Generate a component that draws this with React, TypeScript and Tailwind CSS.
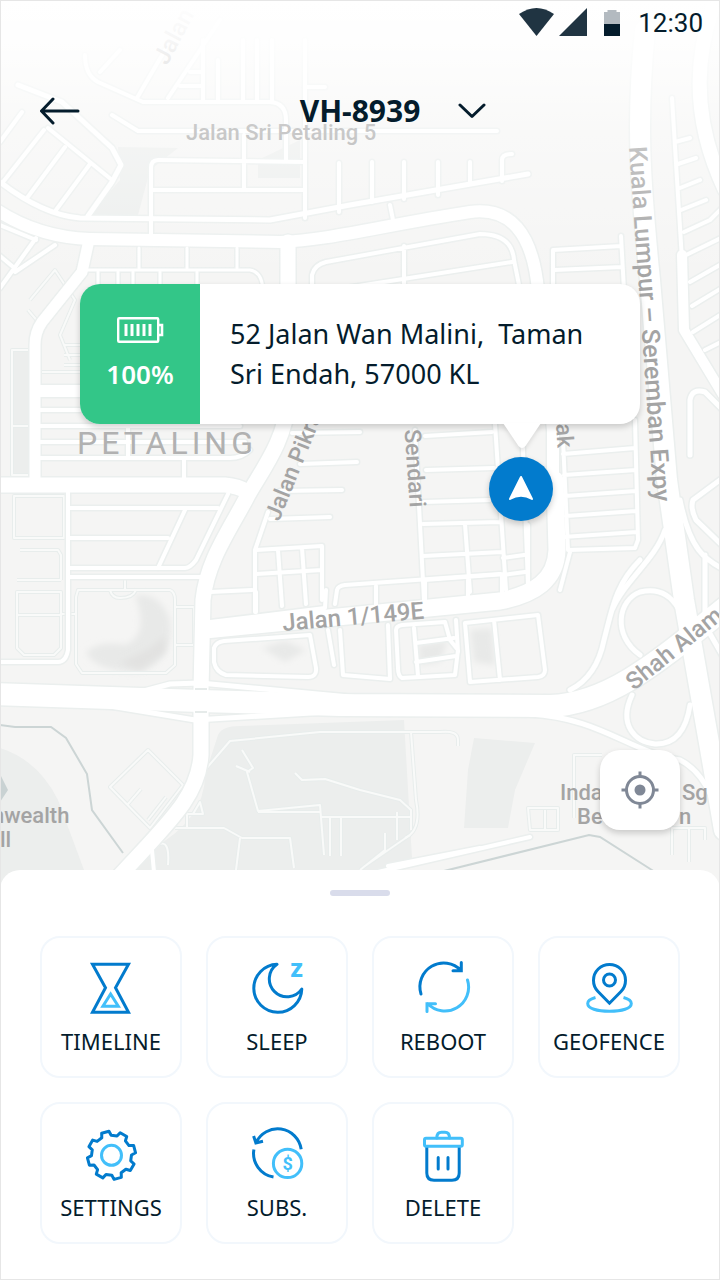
import type { ReactNode } from "react";

type Road = {
  d: string;
  width: number;
};

const majorRoads: Road[] = [
  { d: "M-5 209C25 229 55 238 90 239L280 242C330 240 380 226 470 212Q530 204 538 290L553 430V500", width: 12 },
  { d: "M288 242V400C286 440 262 470 248 495C230 530 207 560 203 600L201 690V755C198 800 165 825 105 892", width: 15 },
  { d: "M89 240L82 272L42 322Q35 332 35 345V485", width: 11 },
  { d: "M-5 485H225Q238 486 248 492", width: 15 },
  { d: "M38 391H270", width: 12 },
  { d: "M555 480L557 550C556 580 535 594 500 601L205 630", width: 17 },
  { d: "M-5 694L200 701L340 705L550 706C610 704 660 660 725 608", width: 22 },
  { d: "M645 30C636 120 640 180 650 280L667 480L684 600L712 760L724 830", width: 20 },
  { d: "M712 10C695 60 692 120 725 190", width: 14 },
  { d: "M682 255L684 330L725 398", width: 10 },
];

const minorRoads: Road[] = [
  // north west blocks
  { d: "M18 85L62 102L112 148L121 165L112 182L88 216", width: 5 },
  { d: "M0 182C30 205 55 216 80 218L270 220L350 205L528 174", width: 5 },
  { d: "M48 128L112 180M65 147L27 198M90 164L56 210M22 112L0 142M44 130L3 182", width: 4 },
  { d: "M85 55Q85 75 98 82L143 102H270Q286 103 286 120V160", width: 4 },
  { d: "M112 115L138 131H497", width: 4 },
  { d: "M151 236V168Q151 160 158 160L305 162M152 190H305M244 135V188M305 40V218M151 218V236", width: 4 },
  { d: "M100 72L120 50M137 98L165 50M168 98L220 20M180 86H203M190 72H203M203 40V100M218 60V100M243 40V100M257 40V100M272 40V100M305 87H325", width: 4 },
  { d: "M339 163V212M372 162V202M404 162V199M438 162V195M470 162V184M502 181V160Q502 154 512 154M390 205L393 220", width: 4 },
  // west side, around the main junction
  { d: "M0 225L36 240M36 238L0 288M0 256L12 266M15 272L55 245", width: 4 },
  { d: "M84 270H250Q262 272 263 290M139 248V268M187 248V268M237 248V268M98 272V285M118 272V290M133 272V290M160 272V290M197 272V290", width: 3 },
  { d: "M312 286V275Q314 265 326 262L480 234Q512 234 514 260L520 290M320 292L512 262M404 246V290", width: 4 },
  { d: "M553 285V250L621 246M554 270L622 267M621 236L624 290M553 285L560 420", width: 4 },
  { d: "M40 410H240M40 426H240M40 442H245M128 410V458M40 458H230Q242 458 250 450M184 458V485", width: 4 },
  { d: "M68 492V650Q66 662 58 662H0M70 508H218M70 538H168M70 568H185Q190 568 196 560L228 494M185 510L158 568M70 577H205", width: 4 },
  { d: "M292 433L360 432M300 464L357 462M280 491L342 490M270 519L330 517", width: 4 },
  { d: "M268 512L255 550V612M256 550L322 546V600M278 550L282 606M302 548L306 604M256 574L322 570M210 592L252 590M256 592V612", width: 4 },
  { d: "M210 622L325 608L326 590M335 604L337 590Q338 586 345 585L500 574", width: 4 },
  // centre grid
  { d: "M415 430L424 600M495 424L506 590M522 424L528 585M425 436L492 432M426 470L494 468M424 502L490 500M423 524L500 522M423 556L502 552M424 580L505 574M465 524L470 592M503 558L524 555M503 575L525 572M528 525V590", width: 4 },
  { d: "M563 440L568 550L635 548L638 540L635 420M563 454L635 448M564 475L636 470M565 496L636 491M566 516L636 511M563 537L637 532M570 552L560 590", width: 4 },
  { d: "M376 586V610M425 582V605M468 580V602M502 576V598M528 574V592", width: 4 },
  { d: "M214 648Q216 642 224 641L310 635L316 668Q317 677 308 677L226 675Q216 672 214 662ZM328 630L334 665M340 630L343 675L390 679L388 625", width: 4 },
  { d: "M396 630Q396 626 402 625L445 622L450 640L458 650L455 675L402 678Q398 676 398 668ZM414 628L418 676M416 643L454 638M416 662L456 656M456 620L458 652", width: 4 },
  { d: "M465 623L538 615L545 670Q545 676 538 677L470 682ZM494 620L500 680", width: 4 },
  // expressway ramps and loops
  { d: "M640 655C612 635 618 600 640 592Q665 586 678 608M632 695C618 725 635 742 655 744Q684 745 690 705", width: 5 },
  { d: "M640 560C615 585 612 610 604 640C600 660 590 680 570 690M665 530C655 560 625 580 612 610", width: 5 },
  { d: "M530 714C600 718 630 752 680 760Q710 775 722 830M140 692L170 684L200 683L360 698M110 706L195 720L360 710", width: 5 },
  { d: "M680 500C690 550 705 560 725 570M720 480L693 500Q690 508 696 520L725 548M690 455V400Q692 388 705 392L725 412M705 555V625L725 660", width: 5 },
  { d: "M672 98L682 260M675 142L690 138M678 164L696 158M680 188L700 180M681 210L706 200M684 232L710 220L725 205M684 256L725 236M690 282L725 262M692 306L725 286M693 332L725 312M705 350L725 340", width: 4 },
  { d: "M378 872L530 837M388 866L480 848", width: 4 },
  { d: "M152 850L154 872", width: 4 },
];

const paths: string[] = [
  "M17 592V648L24 655H54L61 648V592ZM17 615H60M17 580H61",
  "M14 496H64V538H14ZM20 550H58L61 555V580M12 350H30V475H12ZM12 426H38M40 372H80",
  "M78 590H170Q175 592 175 600V665L166 673H82L76 664V597ZM110 590Q112 598 120 598Q133 598 136 590M125 580V590M176 607H196M176 645H194V607M60 614H76",
  "M30 300L55 270L75 300L60 335L70 360M28 310L45 330M64 345H80M64 355H80M64 365H80",
  "M148 750L183 785L150 828L110 787ZM128 804L141 789M148 820L166 797",
  "M205 770L230 741L320 732H440Q458 730 458 740V746M242 750L253 768L247 772L258 811L320 805L324 855M236 766L250 772",
  "M295 773L302 780L325 779L360 790L400 800L411 810V830M320 817H410M330 818V856M341 818V856M258 812H320M397 812V840M385 833V850L360 870M410 835L365 866",
  "M175 828H224L242 838H290L294 868M240 838L236 870M187 828V814H203L200 802L193 814M158 845Q170 838 168 865",
  "M411 732L416 800Q422 830 405 838M574 818V755H602M528 808H558V830H530ZM545 810V830M672 828V855M689 828V862M672 828H705V840",
];

const streetLabels = [
  { text: "Jalan", x: 167, y: 66, rotate: -62, size: 24 },
  { text: "Jalan Sri Petaling 5", x: 186, y: 140, rotate: 0, size: 22 },
  { text: "Jalan Pikrama", x: 279, y: 522, rotate: -68, size: 23 },
  { text: "Lorong Sendari", x: 399, y: 352, rotate: 86, size: 23 },
  { text: "ak", x: 556, y: 424, rotate: 86, size: 23 },
  { text: "Kuala Lumpur – Seremban Expy", x: 629, y: 147, rotate: 86, size: 25 },
  { text: "Jalan 1/149E", x: 283, y: 631, rotate: -5, size: 24 },
  { text: "Shah Alam", x: 634, y: 691, rotate: -39, size: 24 },
  { text: "nwealth", x: -8, y: 823, rotate: 0, size: 22 },
  { text: "ll", x: 0, y: 847, rotate: 0, size: 22 },
  { text: "Inda", x: 560, y: 800, rotate: 0, size: 22 },
  { text: "Sg", x: 682, y: 800, rotate: 0, size: 22 },
  { text: "Be", x: 577, y: 824, rotate: 0, size: 22 },
  { text: "n", x: 679, y: 824, rotate: 0, size: 22 },
];

const MapBackground = () => {
  return (
    <svg
      className="absolute inset-0 -z-10 h-full w-full"
      viewBox="0 0 720 890"
      preserveAspectRatio="xMidYMin slice"
      aria-hidden="true"
    >
      <defs>
        <linearGradient id="fade" x1="0" y1="0" x2="0" y2="1">
          <stop offset="0" stopColor="#fff" />
          <stop offset="0.15" stopColor="#fff" stopOpacity="0.9" />
          <stop offset="0.45" stopColor="#fff" stopOpacity="0.42" />
          <stop offset="1" stopColor="#fff" stopOpacity="0" />
        </linearGradient>
        <filter id="soft" x="-20%" y="-20%" width="140%" height="140%">
          <feGaussianBlur stdDeviation="3" />
        </filter>
      </defs>
      <rect width="720" height="890" fill="#f5f5f4" />

      {/* parks and building ground */}
      <g fill="#eceeed">
        <path d="M205 775L218 735Q222 726 240 726L404 720L412 858L370 890H110L150 850Q205 820 205 775Z" />
        <path d="M474 738L535 743L515 790L508 828H464L468 770Z" />
        <path d="M0 748Q38 760 58 800L84 870V890H0Z" />
        <path d="M118 147L178 148L150 170L138 215H90L120 180Z" />
        <path d="M258 160L300 140V178H258ZM12 350H30V475H12Z" />
      </g>
      <g fill="#e8e9e8" filter="url(#soft)">
        <path d="M135 595Q160 592 170 620Q175 660 140 672Q95 672 86 652Q100 640 125 645Q150 635 135 595Z" />
        <path d="M262 648L285 641L306 650L285 662ZM418 645L448 640L440 662L420 665ZM470 630L492 628L495 665L474 662Z" />
      </g>
      <path d="M120 663L150 648L165 636V652L140 670Z" fill="#e2e2e1" filter="url(#soft)" />
      <path d="M0 774L8 790L0 802Z" fill="#c9d2d3" />

      <g fill="none" stroke="#ccd5d5" strokeWidth="2">
        <path d="M0 725L15 727H51L66 738L87 774L92 810L123 853" />
        <path d="M440 872L589 835L600 837L655 872" />
      </g>

      <g fill="none" strokeLinejoin="round">
        {paths.map((d) => (
          <path key={d} d={d} stroke="#e8edec" strokeWidth="4" />
        ))}
        {paths.map((d) => (
          <path key={d} d={d} stroke="#f9faf9" strokeWidth="2" />
        ))}
      </g>
      <g fill="none" stroke="#ebefee" strokeLinejoin="round" strokeLinecap="round">
        {[...minorRoads, ...majorRoads].map((road) => (
          <path key={road.d} d={road.d} strokeWidth={road.width + 3} />
        ))}
      </g>
      <g fill="none" stroke="#fff" strokeLinejoin="round" strokeLinecap="round">
        {[...minorRoads, ...majorRoads].map((road) => (
          <path key={road.d} d={road.d} strokeWidth={road.width} />
        ))}
      </g>
      <path d="M195 689H207M195 712H207" stroke="#e6ebea" strokeWidth="2" />

      <g className="font-[Roboto,sans-serif] font-medium" fill="#a4a4a4">
        {streetLabels.map(({ text, x, y, rotate, size }) => (
          <text key={text} fontSize={size} transform={`translate(${x} ${y}) rotate(${rotate})`}>
            {text}
          </text>
        ))}
        <text x="77" y="454" className="text-[32px] font-normal tracking-[4px]" fill="#b1b1b1">
          PETALING
        </text>
      </g>
      <rect width="720" height="280" fill="url(#fade)" />
    </svg>
  );
};

const StatusBar = () => {
  return (
    <div className="flex h-11 items-center justify-end pr-[17px]">
      <svg width="101" height="28" viewBox="519 8 101 28" aria-hidden="true">
        <path d="M519 14Q536.500 2 554 14L536.500 36Z" fill="#203442" />
        <path d="M587 8V36H559Z" fill="#203442" />
        <path d="M604 12H607.500V10H616.500V12H620V24H604Z" fill="#b3bac0" />
        <path d="M604 24H620V36H604Z" fill="#041c2c" />
      </svg>
      <span className="ml-[18px] pt-[2px] font-[Roboto,sans-serif] text-[26px] leading-8">12:30</span>
    </div>
  );
};

const Header = () => {
  return (
    <header className="grid h-[134px] grid-cols-[1fr_auto_1fr] items-center px-10">
      <button type="button" aria-label="Back" className="justify-self-start">
        <svg width="40" height="28" viewBox="0 0 40 28" fill="none" stroke="currentColor" strokeWidth="3" strokeLinecap="round" strokeLinejoin="round">
          <path d="M13 2L1.500 14L13 26M2 14H38" />
        </svg>
      </button>
      <h1 className="text-[30px] font-bold leading-10">VH-8939</h1>
      <button type="button" aria-label="Choose vehicle" className="ml-[38px] justify-self-start">
        <svg width="28" height="16" viewBox="0 0 28 16" fill="none" stroke="currentColor" strokeWidth="3" strokeLinecap="round" strokeLinejoin="round">
          <path d="M2 2L14 13.500L26 2" />
        </svg>
      </button>
    </header>
  );
};

const VehicleCallout = () => {
  return (
    <div className="relative mx-20 mt-[106px]">
      <div className="flex min-h-[140px] overflow-hidden rounded-[20px] bg-white shadow-[0_3px_6px_rgba(0,0,0,0.18)]">
        <div className="flex w-[120px] shrink-0 flex-col items-center justify-center gap-3 bg-[#33c688] text-white">
          <svg width="48" height="28" viewBox="0 0 48 28" fill="none" stroke="currentColor" aria-hidden="true">
            <rect x="2.200" y="2.200" width="40" height="23.500" rx="1" strokeWidth="2.400" />
            <path d="M42 9H46V19H42" strokeWidth="2.600" />
            <path d="M10 8V20M16 8V20M22 8V20M28 8V20M34 8V20" strokeWidth="3" />
          </svg>
          <span className="text-[26px] font-semibold leading-9">100%</span>
        </div>
        <p className="flex-1 self-center pl-[30px] text-[27px] leading-10">
          52 Jalan Wan Malini,&nbsp; Taman
          <br />
          Sri Endah, 57000 KL
        </p>
      </div>
      <svg className="absolute right-[98px] top-[139px] drop-shadow-[0_3px_2px_rgba(0,0,0,0.1)]" width="40" height="26" viewBox="0 0 40 26" aria-hidden="true">
        <path d="M1 0H39L23.500 23Q20 27 16.500 23Z" fill="#fff" />
      </svg>
      <div className="absolute right-[87px] top-[173px] flex size-16 items-center justify-center rounded-full bg-[#027bcd] shadow-[0_3px_6px_rgba(0,0,0,0.2)]">
        <svg width="26" height="28" viewBox="0 0 26 28" aria-hidden="true">
          <path d="M13 2L24 24Q13 17.500 2 24Z" fill="#fff" stroke="#fff" strokeWidth="2" strokeLinejoin="round" />
        </svg>
      </div>
    </div>
  );
};

const dark = "#027bcd";
const light = "#42bffa";

// eight teeth, the first one a little left of the top
const gearPoints = Array.from({ length: 8 }, (_, i) =>
  [
    [-14, 20],
    [-9, 24.2],
    [9, 24.2],
    [14, 20],
  ]
    .map(([offset, radius]) => {
      const angle = ((-105 + i * 45 + offset) * Math.PI) / 180;
      return `${28.5 + radius * Math.cos(angle)},${29.3 + radius * Math.sin(angle)}`;
    })
    .join(" "),
).join(" ");

type Action = {
  label: string;
  icon: ReactNode;
};

const actions: Action[] = [
  {
    label: "TIMELINE",
    icon: (
      <>
        <path d="M9.500 4.200H45.500L32.500 27.700L45.500 52.300H9.500L22.500 27.700Z" stroke={dark} />
        <path d="M27.600 34L35.300 46.200H19.900Z" stroke={light} />
      </>
    ),
  },
  {
    label: "SLEEP",
    icon: (
      <>
        <path d="M28 4.300A24 24 0 1 0 52.800 29A17.800 17.800 0 1 1 28 4.300Z" stroke={dark} strokeLinejoin="round" />
        <text x="47.500" y="17" textAnchor="middle" fill={light} className="font-[Open_Sans,sans-serif] text-[20px] font-extrabold">
          Z
        </text>
      </>
    ),
  },
  {
    label: "REBOOT",
    icon: (
      <g strokeLinecap="round">
        <path d="M6 34A23.800 23.800 0 0 1 46 10.500M46.300 2.500V10.800H38" stroke={dark} />
        <path d="M52.500 20A23.800 23.800 0 0 1 12.500 43.500M12 51.500V43.700H20.500" stroke={light} />
      </g>
    ),
  },
  {
    label: "GEOFENCE",
    icon: (
      <>
        <path d="M28.500 43.200L17 31.500A16 16 0 1 1 40 31.500Z" stroke={dark} />
        <circle cx="28.500" cy="20" r="6" stroke={dark} />
        <path d="M14.500 37.500C9 39 6.700 41.300 6.700 43.500C6.700 48.500 16 51.300 28.500 51.300S50.300 48.500 50.300 43.500C50.300 41 48 39 42.500 37.500" stroke={light} />
      </>
    ),
  },
  {
    label: "SETTINGS",
    icon: (
      <>
        <polygon points={gearPoints} stroke={dark} strokeLinejoin="round" />
        <circle cx="28.500" cy="29.300" r="10" stroke={light} />
      </>
    ),
  },
  {
    label: "SUBS.",
    icon: (
      <>
        <path d="M7 16.700A23.800 23.800 0 0 1 52.200 23.300M4.600 10L6.900 16.900L14 15.300M4.900 23.500A23.800 23.800 0 0 0 24.500 51" stroke={dark} />
        <circle cx="38.600" cy="37.400" r="14.200" stroke={light} />
        <text x="38.600" y="44" textAnchor="middle" fill={light} className="font-[Roboto,sans-serif] text-[18px] font-bold">
          $
        </text>
      </>
    ),
  },
  {
    label: "DELETE",
    icon: (
      <g strokeLinecap="round">
        <path d="M11.800 21V47Q11.800 54.200 19 54.200H37Q44.200 54.200 44.200 47V21M23.200 31.500V43M33 31.500V43" stroke={dark} />
        <path d="M21.800 12C21.800 8 24 6.200 26.500 6.200H30C32.500 6.200 34.500 8 34.500 12" stroke={light} />
        <rect x="9.500" y="12.200" width="37.800" height="8" rx="1.500" stroke={light} />
      </g>
    ),
  },
];

const ActionSheet = () => {
  return (
    <section className="relative -mt-5 rounded-t-[20px] bg-white px-10 pb-9 pt-5">
      <div className="mx-auto h-[6px] w-[60px] rounded-full bg-[#d9dceb]" />
      <div className="mt-10 grid grid-cols-4 gap-6">
        {actions.map(({ label, icon }) => (
          <button
            key={label}
            type="button"
            className="flex aspect-square flex-col items-center justify-center gap-3 rounded-[20px] border-2 border-[#f2f7fc] bg-white"
          >
            <svg width="56" height="56" viewBox="0 0 56 56" fill="none" strokeWidth="3" aria-hidden="true">
              {icon}
            </svg>
            <span className="text-[22px] leading-[26px]">{label}</span>
          </button>
        ))}
      </div>
    </section>
  );
};

export default function App() {
  return (
    <div className="relative flex min-h-screen flex-col bg-white font-[Noto_Sans,sans-serif] text-[#041c2c]">
      <main className="relative isolate flex-1 overflow-hidden pb-40">
        <MapBackground />
        <StatusBar />
        <Header />
        <VehicleCallout />
        <button
          type="button"
          aria-label="Show my location"
          className="absolute bottom-[60px] right-10 flex size-20 items-center justify-center rounded-[20px] bg-white text-[#808896] shadow-[0_3px_6px_rgba(0,0,0,0.18)]"
        >
          <svg width="38" height="38" viewBox="0 0 38 38" fill="none" stroke="currentColor" strokeWidth="3" aria-hidden="true">
            <circle cx="19" cy="19" r="13.500" />
            <circle cx="19" cy="19" r="5.500" fill="currentColor" stroke="none" />
            <path d="M19 0.500V6M19 32V37.500M0.500 19H6M32 19H37.500" />
          </svg>
        </button>
      </main>
      <ActionSheet />
      <div className="pointer-events-none absolute inset-0 border border-[#e6e6e6]" />
    </div>
  );
}
